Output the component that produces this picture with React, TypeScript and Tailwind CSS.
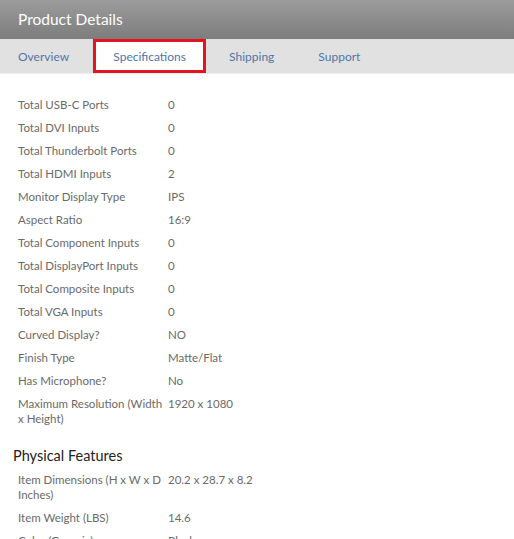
import React from "react";

const specs: [string, string][] = [
  ["Total USB-C Ports", "0"],
  ["Total DVI Inputs", "0"],
  ["Total Thunderbolt Ports", "0"],
  ["Total HDMI Inputs", "2"],
  ["Monitor Display Type", "IPS"],
  ["Aspect Ratio", "16:9"],
  ["Total Component Inputs", "0"],
  ["Total DisplayPort Inputs", "0"],
  ["Total Composite Inputs", "0"],
  ["Total VGA Inputs", "0"],
  ["Curved Display?", "NO"],
  ["Finish Type", "Matte/Flat"],
  ["Has Microphone?", "No"],
  ["Maximum Resolution (Width x Height)", "1920 x 1080"],
];

const physical: [string, string][] = [
  ["Item Dimensions (H x W x D Inches)", "20.2 x 28.7 x 8.2"],
  ["Item Weight (LBS)", "14.6"],
  ["Color (Generic)", "Black"],
];

function Rows({ rows }: { rows: [string, string][] }) {
  return (
    <div className="flex flex-col pl-[18px]">
      {rows.map(([k, v]) => (
        <div key={k} className="flex py-[4px] text-[11.5px] leading-[15px] text-[#6a6a6a]">
          <div className="w-[150px] shrink-0">{k}</div>
          <div>{v}</div>
        </div>
      ))}
    </div>
  );
}

export default function App() {
  return (
    <div className="w-[514px] h-[539px] overflow-hidden bg-white" style={{ fontFamily: "Lato, 'Open Sans', sans-serif" }}>
      <div className="h-[39px] bg-gradient-to-b from-[#9c9c9c] to-[#7d7d7d] flex items-center pl-[18px]">
        <span className="text-white text-[15.5px] leading-none">Product Details</span>
      </div>
      <div className="h-[35px] bg-[#e1e1e1] border-b border-[#f0f0f0] flex items-stretch pl-[18px] text-[12px] text-[#5275a8]">
        <div className="flex items-center pt-[1px] pr-[24px]">Overview</div>
        <div className="flex items-center justify-center pt-[1px] bg-white border-[3px] border-[#e3141c] w-[113px]">Specifications</div>
        <div className="flex items-center pt-[1px] pl-[23px] pr-[44px]">Shipping</div>
        <div className="flex items-center pt-[1px]">Support</div>
      </div>
      <div className="pt-[19px]">
        <Rows rows={specs} />
        <div className="pl-[13px] mt-[16px] mb-[2px] text-[14.5px] leading-[20px] text-[#222]">Physical Features</div>
        <Rows rows={physical} />
      </div>
    </div>
  );
}
